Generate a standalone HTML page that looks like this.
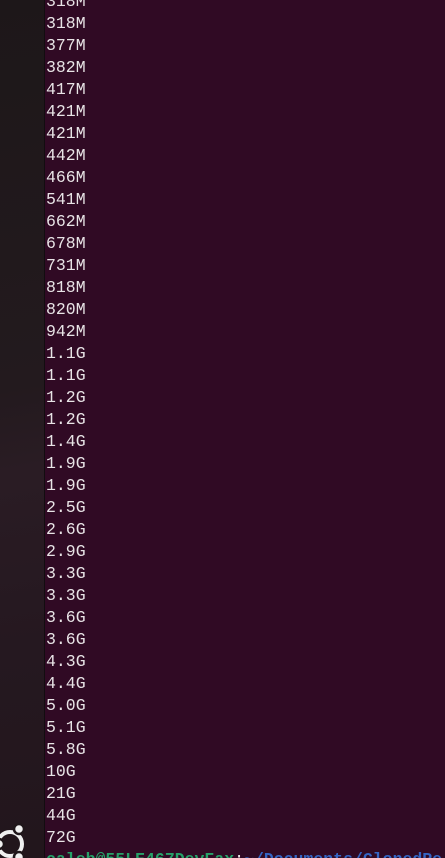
<!DOCTYPE html>
<html><head><style>
html,body{margin:0;padding:0;width:445px;height:858px;overflow:hidden;background:#300a24;position:relative;}
#dock{position:absolute;left:0;top:0;width:44px;height:858px;background:linear-gradient(170deg,#1d1719 0%,#231a1e 45%,#2a1c24 55%,#251820 75%,#22161c 100%);border-right:1px solid #120d10;}
#term{position:absolute;left:46px;top:-9px;width:399px;height:867px;overflow:hidden;font-family:"Liberation Mono","DejaVu Sans Mono",monospace;font-size:16.5px;line-height:22px;color:#e8e4e6;white-space:pre;}
.g{color:#26a269;font-weight:bold}.b{color:#3465c4;font-weight:bold}
</style></head><body>
<div id="dock"></div>
<svg style="position:absolute;left:0;top:820px" width="44" height="38">
<circle cx="10" cy="24" r="12" fill="none" stroke="#f0f0f0" stroke-width="4"/>
<circle cx="19" cy="9" r="5" fill="#f0f0f0" stroke="#1f161a" stroke-width="2.5"/>
<circle cx="-1" cy="24" r="5" fill="#f0f0f0" stroke="#1f161a" stroke-width="2.5"/>
<circle cx="19" cy="37" r="5" fill="#f0f0f0" stroke="#1f161a" stroke-width="2.5"/>
</svg>
<div id="term">318M
318M
377M
382M
417M
421M
421M
442M
466M
541M
662M
678M
731M
818M
820M
942M
1.1G
1.1G
1.2G
1.2G
1.4G
1.9G
1.9G
2.5G
2.6G
2.9G
3.3G
3.3G
3.6G
3.6G
4.3G
4.4G
5.0G
5.1G
5.8G
10G
21G
44G
72G
<span class="g">caleb@55LE467DevFax</span>:<span class="b">~/Documents/ClonedRe</span></div>
</body></html>
